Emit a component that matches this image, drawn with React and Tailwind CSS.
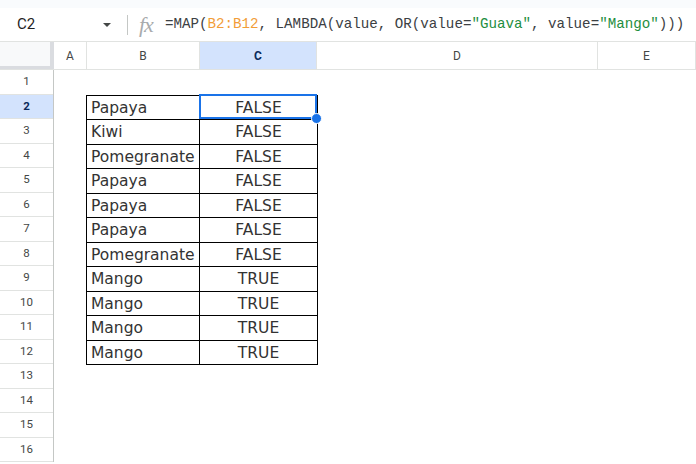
import React from 'react'

const fruits = [
  ['Papaya', 'FALSE'],
  ['Kiwi', 'FALSE'],
  ['Pomegranate', 'FALSE'],
  ['Papaya', 'FALSE'],
  ['Papaya', 'FALSE'],
  ['Papaya', 'FALSE'],
  ['Pomegranate', 'FALSE'],
  ['Mango', 'TRUE'],
  ['Mango', 'TRUE'],
  ['Mango', 'TRUE'],
  ['Mango', 'TRUE'],
]

const rowNums = Array.from({ length: 16 }, (_, i) => i + 1)

function FormulaBar() {
  return (
    <div className="flex h-[34px] items-center border-b border-[#e1e3e1] bg-white">
      <div className="w-[96px] pl-[17px] text-[15px] text-[#1f1f1f]" style={{ fontFamily: 'Roboto, sans-serif' }}>
        C2
      </div>
      <svg width="10" height="6" viewBox="0 0 10 6" className="ml-[6px]">
        <path d="M1 1h8L5 5z" fill="#444746" />
      </svg>
      <div className="ml-[15px] h-[20px] w-px bg-[#c4c7c5]" />
      <div
        className="ml-[11px] text-[22px] italic leading-none tracking-[-1px] text-[#a8abad]"
        style={{ fontFamily: '"Liberation Serif", serif' }}
      >
        fx
      </div>
      <div
        className="ml-[12px] whitespace-pre text-[14.2px] text-[#3c4043]"
        style={{ fontFamily: '"Liberation Mono", monospace' }}
      >
        =MAP(<span className="text-[#f29d38]">B2:B12</span>, LAMBDA(value, OR(value=
        <span className="text-[#1e8e3e]">"Guava"</span>, value=<span className="text-[#1e8e3e]">"Mango"</span>)))
      </div>
    </div>
  )
}

function ColumnHeaders() {
  const cols = [
    ['A', 'w-[33px]'],
    ['B', 'w-[113px]'],
    ['C', 'w-[117px]'],
    ['D', 'w-[281px]'],
    ['E', 'flex-1'],
  ]
  return (
    <div className="flex h-[28px] border-b border-[#e1e3e1] bg-white text-[12px]">
      <div className="w-[54px] shrink-0 border-r-[4px] border-b-[3px] border-[#dadce0] bg-[#f8f9fa]" />
      {cols.map(([name, w]) => (
        <div
          key={name}
          className={`${w} flex shrink-0 items-center justify-center border-r border-[#e1e3e1] ${
            name === 'C' ? 'bg-[#d3e3fd] font-bold text-[#0b2a5b]' : 'text-[#444746]'
          }`}
        >
          {name}
        </div>
      ))}
    </div>
  )
}

export default function App() {
  return (
    <div className="relative h-[464px] w-[696px] overflow-hidden bg-white" style={{ fontFamily: 'Roboto, sans-serif' }}>
      <div className="h-[8px] bg-[#f9fbfd]" />
      <FormulaBar />
      <ColumnHeaders />

      <div className="flex">
        {/* row numbers */}
        <div className="w-[54px] shrink-0 border-r border-[#c4c7c5]">
          {rowNums.map((n) => (
            <div
              key={n}
              className={`flex h-[24.5px] items-center justify-center border-b border-[#e1e3e1] text-[11.5px] ${
                n === 2 ? 'bg-[#d3e3fd] font-bold text-[#0b2a5b]' : 'text-[#444746]'
              }`}
            >
              {n}
            </div>
          ))}
        </div>

        {/* sheet area */}
        <div className="relative flex-1">
          <div className="relative ml-[32px] mt-[24.5px] w-[231px]">
            <table
              className="w-[231px] table-fixed border-collapse text-[15.5px] text-[#333333]"
              style={{ fontFamily: '"DejaVu Sans", Verdana, sans-serif' }}
            >
              <tbody>
                {fruits.map(([name, val], i) => (
                  <tr key={i} className="h-[24.5px]">
                    <td className="w-[113px] border border-black p-0 pl-[4px] pt-[2px] leading-none">{name}</td>
                    <td className="w-[118px] border border-black p-0 pt-[2px] text-center leading-none">{val}</td>
                  </tr>
                ))}
              </tbody>
            </table>
            {/* selection */}
            <div className="absolute left-[113px] top-[-0.5px] h-[25px] w-[118px] border-2 border-[#1a73e8]" />
            <div className="absolute left-[225px] top-[18px] h-[11px] w-[11px] rounded-full border border-white bg-[#1a73e8]" />
          </div>
        </div>
      </div>
    </div>
  )
}
